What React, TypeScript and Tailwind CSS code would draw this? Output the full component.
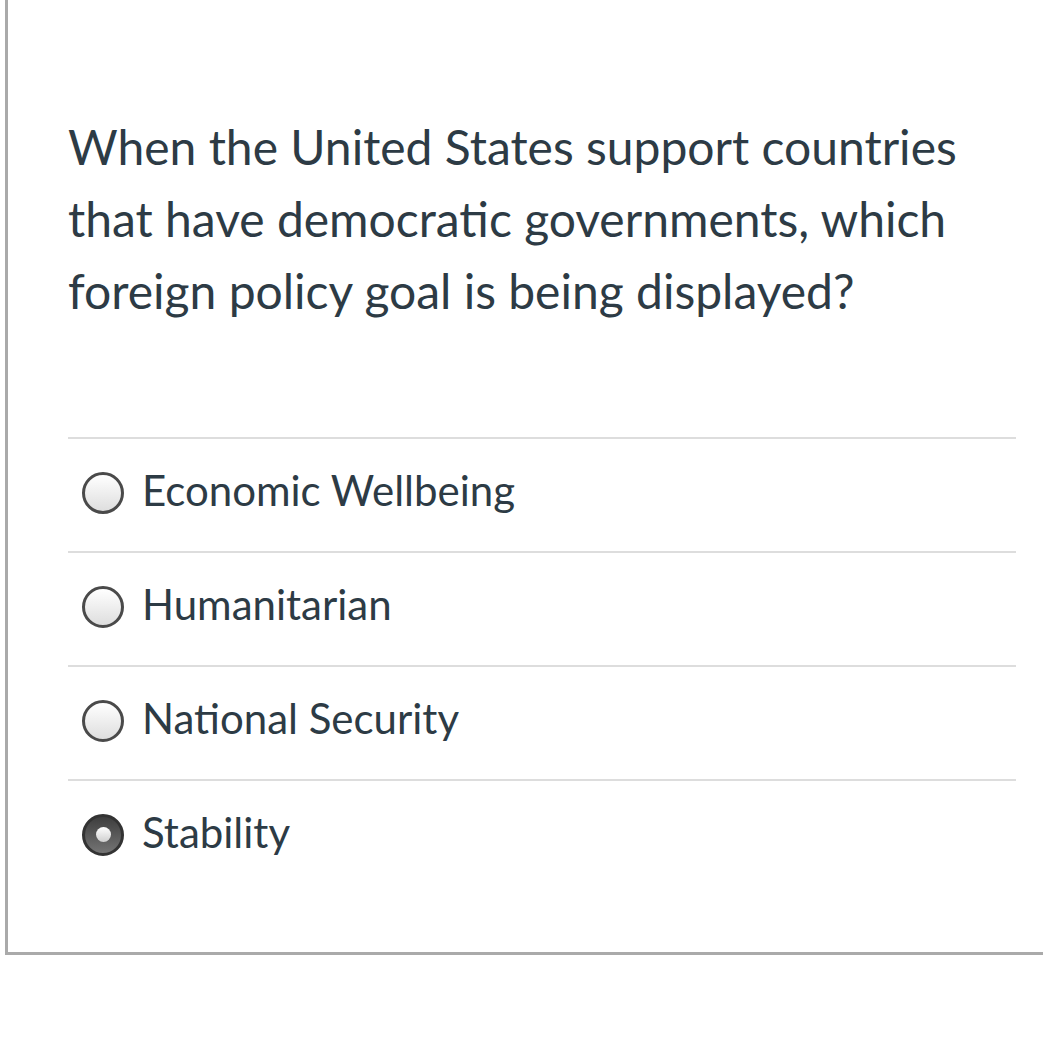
import React from "react";

const options = [
  { label: "Economic Wellbeing", checked: false },
  { label: "Humanitarian", checked: false },
  { label: "National Security", checked: false },
  { label: "Stability", checked: true },
];

function Radio({ checked }: { checked: boolean }) {
  if (checked) {
    return (
      <span className="flex size-[42px] shrink-0 items-center justify-center rounded-full border-[3px] border-[#333333] bg-gradient-to-b from-[#3e3e3e] to-[#757575]">
        <span className="size-[15px] rounded-full bg-gradient-to-b from-[#ffffff] to-[#cfcfcf]" />
      </span>
    );
  }
  return (
    <span className="block size-[42px] shrink-0 rounded-full border-[3px] border-[#4a4a4a] bg-gradient-to-b from-[#ffffff] to-[#dedede]" />
  );
}

export default function App() {
  return (
    <div className="min-h-[1044px] overflow-hidden bg-white font-['Lato','Liberation_Sans',sans-serif] text-[#2d3b45]">
      <div className="ml-[5px] border-b-[3px] border-l-[3px] border-[#aaaaaa] pb-[59px] pl-[60px] pt-[111px]">
        <p className="w-[948px] text-[48px] leading-[72px]">
          When the United States support countries that have democratic governments, which foreign
          policy goal is being displayed?
        </p>
        <ul className="mt-[110px] w-[948px]">
          {options.map((option) => (
            <li
              key={option.label}
              className="box-border h-[114px] border-t-2 border-[#dddddd] pt-[26px]"
            >
              <label className="flex items-center gap-[18px] pl-[14px]">
                <span className="mt-[5px]">
                  <Radio checked={option.checked} />
                </span>
                <span className="text-[42px] leading-[50px]">{option.label}</span>
              </label>
            </li>
          ))}
        </ul>
      </div>
    </div>
  );
}
